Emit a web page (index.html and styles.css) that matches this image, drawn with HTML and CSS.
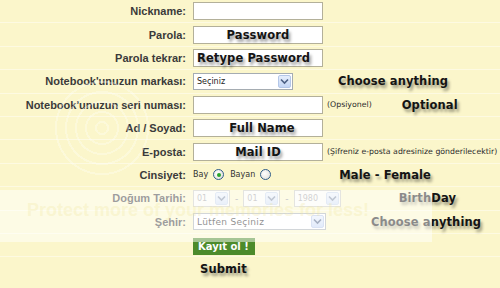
FILE: index.html
```html
<!DOCTYPE html>
<html>
<head>
    <meta charset="utf-8">
    <title>Üye Kayıt</title>
    <link rel="stylesheet" href="styles.css">
</head>
<body>
    <div class="form">
        <div class="row">
            <div class="label">Nickname:</div>
            <div class="cell"><div class="field"></div></div>
        </div>
        <div class="row">
            <div class="label">Parola:</div>
            <div class="cell"><div class="field note center">Password</div></div>
        </div>
        <div class="row">
            <div class="label">Parola tekrar:</div>
            <div class="cell"><div class="field note">Retype Password</div></div>
        </div>
        <div class="row">
            <div class="label">Notebook'unuzun markası:</div>
            <div class="cell">
                <div class="select w-brand"><span>Seçiniz</span><span class="arrow"><svg width="9" height="7" viewBox="0 0 9 7"><path d="M1 1.5 L4.5 5 L8 1.5" fill="none" stroke="#4d6185" stroke-width="1.6"/></svg></span></div>
                <span class="note choose1">Choose anything</span>
            </div>
        </div>
        <div class="row">
            <div class="label">Notebook'unuzun seri numası:</div>
            <div class="cell">
                <div class="field"></div>
                <span class="hint">(Opsiyonel)</span>
                <span class="note optional">Optional</span>
            </div>
        </div>
        <div class="row">
            <div class="label">Ad / Soyad:</div>
            <div class="cell"><div class="field note center fullname">Full Name</div></div>
        </div>
        <div class="row">
            <div class="label">E-posta:</div>
            <div class="cell">
                <div class="field note center mailid">Mail ID</div>
                <span class="hint">(Şifreniz e-posta adresinize gönderilecektir)</span>
            </div>
        </div>
        <div class="row">
            <div class="label">Cinsiyet:</div>
            <div class="cell">
                <span class="small">Bay</span>
                <span class="radio checked"></span>
                <span class="small">Bayan</span>
                <span class="radio"></span>
                <span class="note gender">Male - Female</span>
            </div>
        </div>
        <div class="row">
            <div class="label">Doğum Tarihi:</div>
            <div class="cell dates">
                <div class="select w-day disabled"><span>01</span><span class="arrow"><svg width="9" height="7" viewBox="0 0 9 7"><path d="M1 1.5 L4.5 5 L8 1.5" fill="none" stroke="#4d6185" stroke-width="1.6"/></svg></span></div>
                <span class="dash">-</span>
                <div class="select w-day disabled"><span>01</span><span class="arrow"><svg width="9" height="7" viewBox="0 0 9 7"><path d="M1 1.5 L4.5 5 L8 1.5" fill="none" stroke="#4d6185" stroke-width="1.6"/></svg></span></div>
                <span class="dash">-</span>
                <div class="select w-year disabled"><span>1980</span><span class="arrow"><svg width="9" height="7" viewBox="0 0 9 7"><path d="M1 1.5 L4.5 5 L8 1.5" fill="none" stroke="#4d6185" stroke-width="1.6"/></svg></span></div>
                <span class="note birthday">BirthDay</span>
            </div>
        </div>
        <div class="row">
            <div class="label">Şehir:</div>
            <div class="cell">
                <div class="select w-city"><span class="city">Lütfen Seçiniz</span><span class="arrow"><svg width="9" height="7" viewBox="0 0 9 7"><path d="M1 1.5 L4.5 5 L8 1.5" fill="none" stroke="#4d6185" stroke-width="1.6"/></svg></span></div>
                <span class="note choose2">Choose anything</span>
            </div>
        </div>
        <div class="row">
            <div class="label"></div>
            <div class="cell"><span class="button">Kayıt ol !</span></div>
        </div>
        <div class="row last">
            <div class="label"></div>
            <div class="cell"><span class="note submit">Submit</span></div>
        </div>
    </div>

    <!-- photo host watermark -->
    <div class="mark-rings"></div>
    <div class="mark-band">Protect more of your memories for less!</div>
</body>
</html>
```

FILE: styles.css
```css
body {
    margin: 0;
    width: 500px;
    height: 288px;
    overflow: hidden;
    background-color: #fbf6cb;
    font-family: "Liberation Sans", Arial, sans-serif;
    position: relative;
}

.row {
    display: grid;
    grid-template-columns: 186px 1fr;
    column-gap: 7px;
    height: 23.4px;
    align-items: center;
    box-sizing: border-box;
    border-bottom: 1px solid #fdfae2;
}

.row.last {
    border-bottom: none;
}

.label {
    text-align: right;
    font-size: 11px;
    font-weight: bold;
    color: #3a3a3a;
    white-space: nowrap;
}

.cell {
    display: flex;
    align-items: center;
    white-space: nowrap;
}

.field {
    width: 128px;
    height: 16px;
    background-color: #fff;
    border: 1px solid #b3b09a;
    flex: none;
}

.note {
    font-family: "DejaVu Sans", Verdana, sans-serif;
    font-size: 11.5px;
    font-weight: bold;
    color: #141414;
    letter-spacing: 0.1px;
    text-shadow: 2px 3px 3px rgba(0, 0, 0, 0.4);
}

.field.note {
    font-size: 11.5px;
    line-height: 16px;
    padding-left: 3px;
    box-sizing: content-box;
    width: 125px;
}

.field.center {
    text-align: center;
    padding-left: 0;
    width: 128px;
}

.field.fullname {
    padding-left: 8px;
    width: 120px;
}

.select {
    display: flex;
    align-items: center;
    justify-content: space-between;
    height: 15px;
    background-color: #fff;
    border: 1px solid #a5acb2;
    font-family: "DejaVu Sans", Verdana, sans-serif;
    font-size: 8px;
    color: #222;
    padding-left: 3px;
    flex: none;
}

.arrow {
    width: 13px;
    height: 13px;
    margin-right: 1px;
    box-sizing: border-box;
    border: 1px solid #b4c7e8;
    border-radius: 2px;
    background: linear-gradient(#e6eefc, #c4d6f5);
    display: flex;
    align-items: center;
    justify-content: center;
}

.w-brand {
    width: 95px;
}

.w-day {
    width: 32px;
}

.w-year {
    width: 42px;
}

.w-city {
    width: 128px;
}

.city {
    font-size: 9px;
    letter-spacing: 0.3px;
}

.select.disabled {
    color: #a4a4a4;
    border-color: #c9c9c0;
    background-color: #fbfbf5;
}

.select.disabled .arrow {
    opacity: 0.7;
}

.dash {
    font-size: 10px;
    color: #9a9a9a;
    margin: 0 5px 0 5px;
}

.hint {
    font-family: "DejaVu Sans", Verdana, sans-serif;
    font-size: 7.8px;
    color: #2b2b2b;
    margin-left: 4px;
}

.small {
    font-family: "DejaVu Sans", Verdana, sans-serif;
    font-size: 8px;
    color: #333;
}

.radio {
    width: 11px;
    height: 11px;
    box-sizing: border-box;
    border: 1px solid #2f5d8a;
    border-radius: 50%;
    background: radial-gradient(circle at 40% 40%, #fff, #dcdcd4);
    margin: 0 6px 0 5px;
    position: relative;
}

.radio.checked::after {
    content: "";
    position: absolute;
    left: 2.5px;
    top: 2.5px;
    width: 4px;
    height: 4px;
    border-radius: 50%;
    background-color: #2aa52a;
}

.choose1 {
    margin-left: 45px;
}

.optional {
    margin-left: 30px;
}

.gender {
    margin-left: 62px;
}

.birthday {
    margin-left: 58px;
}

.choose2 {
    margin-left: 45px;
}

.button {
    display: inline-block;
    background-color: #4c8b2b;
    color: #fff;
    font-family: "DejaVu Sans", Verdana, sans-serif;
    font-size: 10px;
    font-weight: bold;
    padding: 2px 6px 2px 5px;
    margin-top: 2px;
    line-height: 13px;
}

.submit {
    margin-left: 7px;
}

.mark-band {
    position: absolute;
    left: 0;
    top: 190px;
    width: 432px;
    height: 52px;
    background-color: rgba(255, 255, 255, 0.5);
    font-family: "Liberation Sans", Arial, sans-serif;
    font-size: 18px;
    font-weight: bold;
    color: rgba(240, 230, 160, 0.3);
    padding: 10px 0 0 27px;
    box-sizing: border-box;
    white-space: nowrap;
}

.mark-rings {
    position: absolute;
    left: 52px;
    top: 78px;
    width: 100px;
    height: 100px;
    border-radius: 50%;
    background: repeating-radial-gradient(circle, rgba(255, 255, 255, 0) 0 5px, rgba(255, 255, 255, 0.3) 5px 7px, rgba(255, 255, 255, 0) 7px 10px);
    -webkit-mask: radial-gradient(circle, #000 0 50px, transparent 50px);
}
```
